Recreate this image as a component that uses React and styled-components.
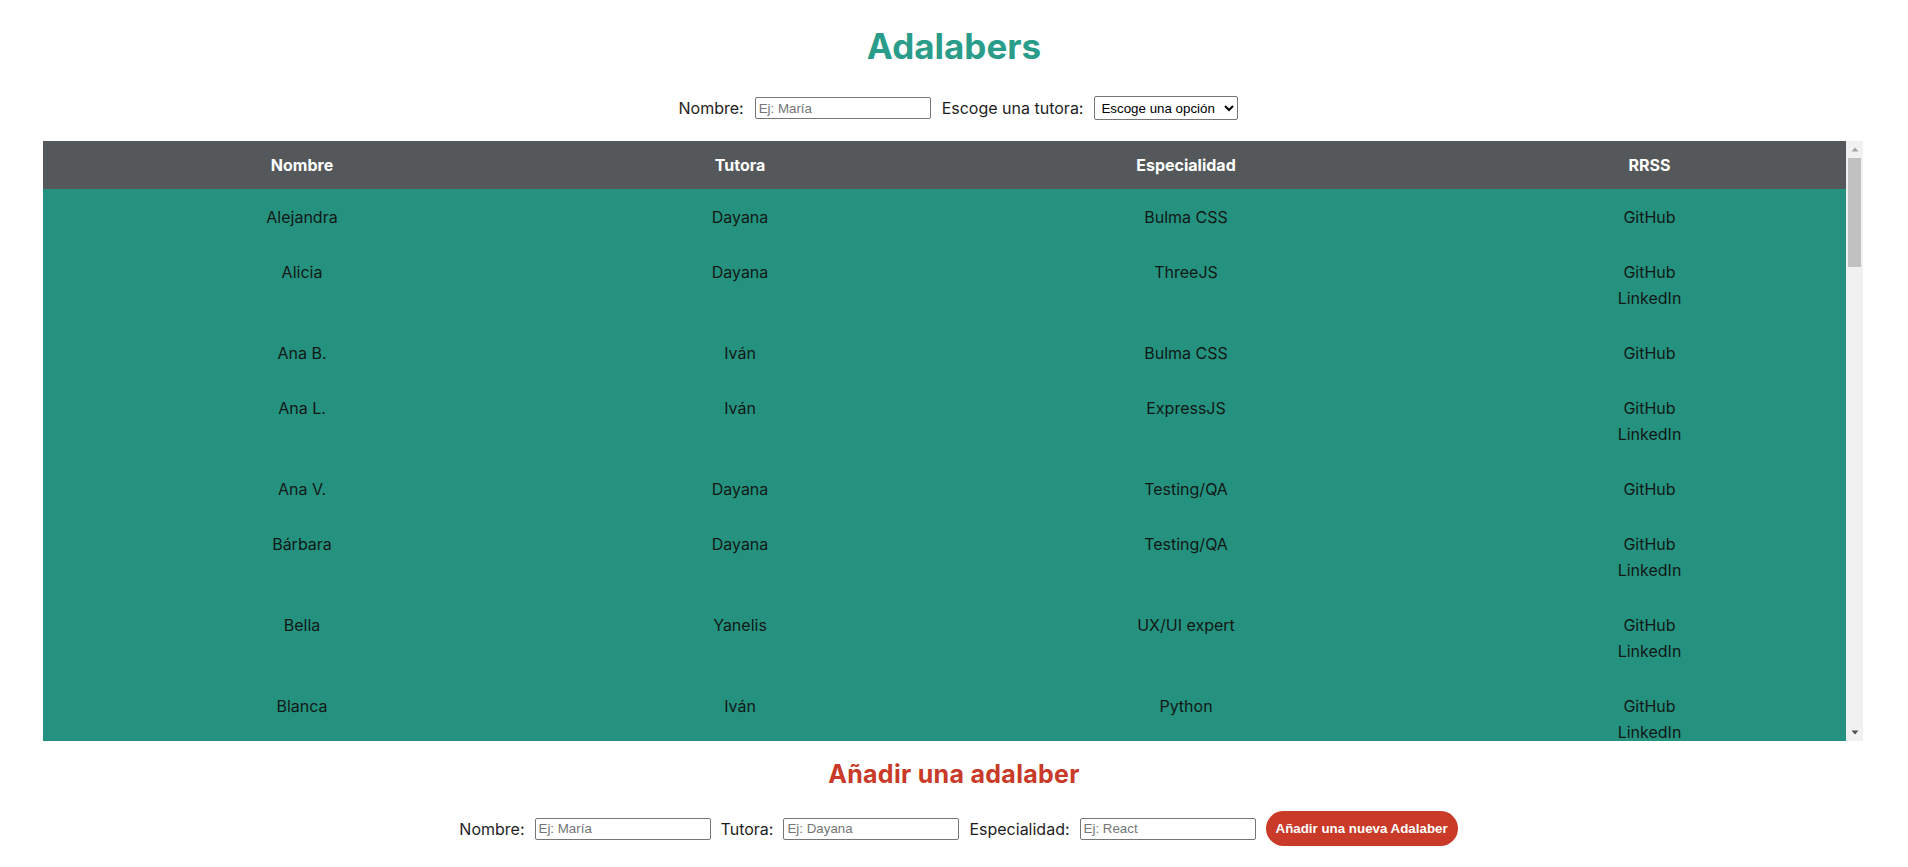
import React, { useEffect, useRef, useState } from "react";
import styled, { createGlobalStyle } from "styled-components";

const GlobalStyle = createGlobalStyle`
  html, body { margin: 0; padding: 0; background: #ffffff; }
  body { font-family: "Inter", "Noto Sans", sans-serif; color: #1c1c1c; }
`;

const Page = styled.main`
  display: flex;
  flex-direction: column;
  align-items: stretch;
`;

const Title = styled.h1`
  margin: 25px 0 0;
  text-align: center;
  font-size: 35px;
  line-height: 43px;
  font-weight: 700;
  color: #2a9d8a;
`;

const SubTitle = styled.h2`
  margin: 18px 0 0;
  text-align: center;
  font-size: 25px;
  line-height: 30px;
  letter-spacing: 0.3px;
  font-weight: 700;
  color: #c93a28;
`;

const FormRow = styled.form`
  display: flex;
  justify-content: center;
  align-items: center;
  gap: ${(p) => p.$gap}px;
  margin-top: ${(p) => p.$top}px;
  padding-left: 9px;
  height: ${(p) => p.$height}px;
`;

const Label = styled.label`
  font-size: 16px;
  color: #1e1e1e;
  white-space: nowrap;
`;

const TextInput = styled.input`
  box-sizing: border-box;
  width: 176px;
  height: 22px;
  padding: 1px 3px;
  border: 1px solid #767676;
  border-radius: 2px;
  font-family: "Liberation Sans", Arial, sans-serif;
  font-size: 13.33px;
  color: #000;
  background: #fff;
  &::placeholder { color: #757575; }
`;

const Select = styled.select`
  box-sizing: border-box;
  width: 144px;
  height: 24px;
  padding: 0 2px;
  font-family: "Liberation Sans", Arial, sans-serif;
  font-size: 13.33px;
  color: #000;
  background: #fff;
  border: 1px solid #767676;
  border-radius: 2px;
`;

const Button = styled.button`
  height: 35px;
  padding: 0 10px;
  border: none;
  border-radius: 18px;
  background: #c93a28;
  color: #ffffff;
  font-family: "Liberation Sans", Arial, sans-serif;
  font-size: 13.33px;
  font-weight: 700;
  white-space: nowrap;
  cursor: pointer;
`;

const TableArea = styled.section`
  display: flex;
  margin: 21px 45px 0 43px;
  height: 600px;
`;

const TableScroll = styled.div`
  flex: 1;
  min-width: 0;
  overflow-y: auto;
  overflow-x: hidden;
  scrollbar-width: none;
  &::-webkit-scrollbar { display: none; }
`;

const ScrollBar = styled.div`
  width: 17px;
  flex: 0 0 17px;
  display: flex;
  flex-direction: column;
  background: #f1f1f1;
`;

const ArrowButton = styled.div`
  height: 17px;
  flex: 0 0 17px;
  display: flex;
  align-items: center;
  justify-content: center;
`;

const Track = styled.div`
  position: relative;
  flex: 1;
`;

const Thumb = styled.div`
  position: absolute;
  left: 2px;
  right: 2px;
  background: #c1c1c1;
`;

const Table = styled.table`
  width: 100%;
  table-layout: fixed;
  border-collapse: collapse;
  background: #25927f;
`;

const HeadCell = styled.th`
  height: 48px;
  padding: 0 8px;
  background: #54585b;
  color: #ffffff;
  font-size: 16px;
  font-weight: 700;
  text-align: center;
  vertical-align: middle;
`;

const Cell = styled.td`
  padding: 15px 8px 14px;
  font-size: 16px;
  line-height: 26px;
  color: #111816;
  text-align: center;
  vertical-align: top;
`;

const SocialLink = styled.a`
  display: block;
  color: #111816;
  text-decoration: none;
`;

const rows = [
  ["Alejandra", "Dayana", "Bulma CSS", 1],
  ["Alicia", "Dayana", "ThreeJS", 2],
  ["Ana B.", "Iván", "Bulma CSS", 1],
  ["Ana L.", "Iván", "ExpressJS", 2],
  ["Ana V.", "Dayana", "Testing/QA", 1],
  ["Bárbara", "Dayana", "Testing/QA", 2],
  ["Bella", "Yanelis", "UX/UI expert", 2],
  ["Blanca", "Iván", "Python", 2],
  ["Carmen", "Yanelis", "React", 1],
  ["Carolina", "Dayana", "Angular", 2],
  ["Celia", "Iván", "Vue", 1],
  ["Cristina", "Yanelis", "Node JS", 2],
  ["Elena", "Dayana", "Bulma CSS", 2],
  ["Esther", "Iván", "TypeScript", 1],
  ["Eva", "Yanelis", "Testing/QA", 2],
  ["Gloria", "Dayana", "Python", 1],
  ["Inés", "Iván", "ExpressJS", 2],
  ["Irene", "Yanelis", "UX/UI expert", 2],
  ["Isabel", "Dayana", "React", 1],
  ["Laura", "Iván", "ThreeJS", 2],
  ["Lucía", "Yanelis", "Angular", 1],
  ["María", "Dayana", "Vue", 2],
  ["Marta", "Iván", "Node JS", 2],
  ["Mónica", "Yanelis", "Bulma CSS", 1],
  ["Nerea", "Dayana", "Python", 2],
  ["Noelia", "Iván", "Testing/QA", 1],
  ["Paula", "Yanelis", "React", 2],
  ["Raquel", "Dayana", "TypeScript", 2],
  ["Rocío", "Iván", "ExpressJS", 1],
  ["Sandra", "Yanelis", "UX/UI expert", 2],
  ["Sara", "Dayana", "ThreeJS", 1],
  ["Silvia", "Iván", "Angular", 2],
  ["Sofía", "Yanelis", "Vue", 2],
  ["Susana", "Dayana", "Node JS", 1],
  ["Teresa", "Iván", "Bulma CSS", 2],
  ["Valeria", "Yanelis", "Python", 1],
  ["Verónica", "Dayana", "React", 2],
  ["Virginia", "Iván", "Testing/QA", 1],
  ["Yolanda", "Yanelis", "UX/UI expert", 2],
  ["Zaida", "Dayana", "ExpressJS", 1],
  ["Zaira", "Iván", "Vue", 2],
  ["Zoe", "Iván", "ThreeJS", 1],
  ["Zuriñe", "Yanelis", "Angular", 2],
  ["Zulema", "Dayana", "Python", 1],
];

const colWidths = [518, 358, 534, 393];

function Arrow({ up }) {
  return (
    <svg width="8" height="5" viewBox="0 0 8 5" aria-hidden="true">
      {up ? (
        <path d="M4 0.5 L7.5 4.5 L0.5 4.5 Z" fill="#a3a3a3" />
      ) : (
        <path d="M0.5 0.5 L7.5 0.5 L4 4.5 Z" fill="#505050" />
      )}
    </svg>
  );
}

export default function App() {
  const scrollRef = useRef(null);
  const trackRef = useRef(null);
  const [thumb, setThumb] = useState({ top: 0, height: 110 });

  const update = () => {
    const el = scrollRef.current;
    const tr = trackRef.current;
    if (!el || !tr) return;
    const trackH = tr.clientHeight;
    const ratio = el.clientHeight / el.scrollHeight;
    const h = Math.max(20, trackH * ratio);
    const maxScroll = el.scrollHeight - el.clientHeight;
    const top = maxScroll > 0 ? (el.scrollTop / maxScroll) * (trackH - h) : 0;
    setThumb({ top, height: h });
  };

  useEffect(() => {
    update();
  }, []);

  return (
    <Page>
      <GlobalStyle />
      <Title>Adalabers</Title>
      <FormRow $top={28} $height={24} $gap={11} onSubmit={(e) => e.preventDefault()}>
        <Label htmlFor="filter-name">Nombre:</Label>
        <TextInput id="filter-name" type="text" placeholder="Ej: María" />
        <Label htmlFor="filter-tutor">Escoge una tutora:</Label>
        <Select id="filter-tutor" defaultValue="">
          <option value="">Escoge una opción</option>
          <option value="Dayana">Dayana</option>
          <option value="Iván">Iván</option>
          <option value="Yanelis">Yanelis</option>
        </Select>
      </FormRow>
      <TableArea>
        <TableScroll ref={scrollRef} onScroll={update}>
          <Table>
            <colgroup>
              {colWidths.map((w, i) => (
                <col key={i} style={{ width: `${w}px` }} />
              ))}
            </colgroup>
            <thead>
              <tr>
                <HeadCell>Nombre</HeadCell>
                <HeadCell>Tutora</HeadCell>
                <HeadCell>Especialidad</HeadCell>
                <HeadCell>RRSS</HeadCell>
              </tr>
            </thead>
            <tbody>
              {rows.map(([name, tutor, spec, links], i) => (
                <tr key={i}>
                  <Cell>{name}</Cell>
                  <Cell>{tutor}</Cell>
                  <Cell>{spec}</Cell>
                  <Cell>
                    <SocialLink href="#">GitHub</SocialLink>
                    {links > 1 && <SocialLink href="#">LinkedIn</SocialLink>}
                  </Cell>
                </tr>
              ))}
            </tbody>
          </Table>
        </TableScroll>
        <ScrollBar aria-hidden="true">
          <ArrowButton>
            <Arrow up />
          </ArrowButton>
          <Track ref={trackRef}>
            <Thumb style={{ top: `${thumb.top}px`, height: `${thumb.height}px` }} />
          </Track>
          <ArrowButton>
            <Arrow />
          </ArrowButton>
        </ScrollBar>
      </TableArea>
      <SubTitle>Añadir una adalaber</SubTitle>
      <FormRow $top={22} $height={35} $gap={10} onSubmit={(e) => e.preventDefault()}>
        <Label htmlFor="new-name">Nombre:</Label>
        <TextInput id="new-name" type="text" placeholder="Ej: María" />
        <Label htmlFor="new-tutor">Tutora:</Label>
        <TextInput id="new-tutor" type="text" placeholder="Ej: Dayana" />
        <Label htmlFor="new-spec">Especialidad:</Label>
        <TextInput id="new-spec" type="text" placeholder="Ej: React" />
        <Button type="submit">Añadir una nueva Adalaber</Button>
      </FormRow>
    </Page>
  );
}
